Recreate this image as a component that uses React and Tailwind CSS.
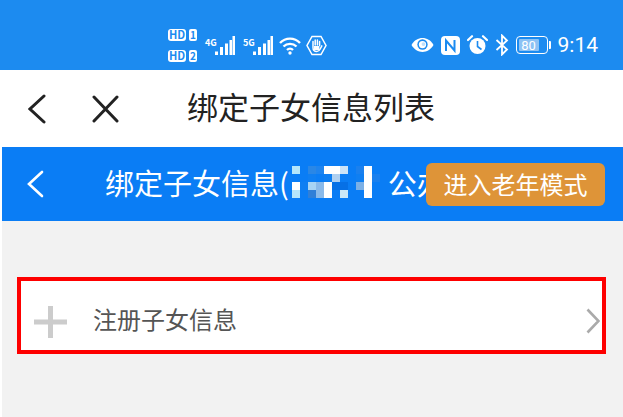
import React from 'react'

const CJK = { fontFamily: '"Noto Sans CJK SC", "Noto Sans", sans-serif' }

const B = '#0a7df5'
const W = '#ffffff'

// mosaic over the blurred name in the title, 8px cells
const MOSAIC = [
  ['#b5e6fb', B, '#2a87e6', '#1f84ee', W, W, '#cbe3f8', B, '#1a80ee', W, B],
  [B, B, '#0f7ff2', B, '#0f7ff2', '#b0d0f0', B, B, '#0f7ff2', W, '#1a80ee'],
  [W, '#0f7ff2', '#a8d4f4', '#8abaea', W, '#0670e6', '#0670e6', B, '#7cb0e6', W, B],
  ['#b5e6fb', B, '#2f7fd8', '#8abaea', W, B, '#cbe8f8', B, B, W, B],
]

const HdBadge = ({ n }) => (
  <div className="flex items-center gap-[3px]">
    <span className="flex h-[12px] w-[18px] items-center justify-center rounded-[3px] bg-white text-[11px] font-bold leading-none text-[#1c8bf0]">HD</span>
    <span className="flex h-[12px] w-[8px] items-center justify-center rounded-[2px] bg-white text-[10px] font-bold leading-none text-[#1c8bf0]">{n}</span>
  </div>
)

const Signal = ({ label }) => (
  <div className="flex items-start">
    <span className="mt-[2px] w-[10px] whitespace-nowrap text-[9px] font-bold leading-none text-white">{label}</span>
    <svg width="20" height="19" viewBox="0 0 20 19" fill="#fff">
      <rect x="0" y="15.5" width="3" height="3.5" />
      <rect x="5" y="11" width="3" height="8" />
      <rect x="10" y="7.5" width="3" height="11.5" />
      <rect x="14.5" y="4" width="2.5" height="15" />
      <rect x="17.5" y="0" width="2.5" height="19" />
    </svg>
  </div>
)

const Wifi = () => (
  <svg width="22" height="19" viewBox="0 0 22 19" fill="none" stroke="#fff" strokeWidth="2.4">
    <path d="M1 7C6.5 1.2 15.5 1.2 21 7" />
    <path d="M4.5 10.5C8 7 14 7 17.5 10.5" />
    <path d="M8 14C9.7 12.4 12.3 12.4 14 14" />
    <circle cx="11" cy="17" r="1.7" fill="#fff" stroke="none" />
  </svg>
)

const HandHex = () => (
  <svg width="21" height="21" viewBox="0 0 21 21" fill="none">
    <path d="M6 1.5H15L20 10.5L15 19.5H6L1 10.5Z" stroke="#fff" strokeWidth="1.5" />
    <path d="M7 10V6.5M9.2 10V5M11.4 10V5M13.6 10.5V6.5M7 9V12.5C7 15 8.6 16.5 10.8 16.5C12.6 16.5 13.5 15.5 14.2 14L15.8 10.8" stroke="#fff" strokeWidth="1.5" strokeLinecap="round" />
    <path d="M8 11H13.4V15H8Z" fill="#fff" />
  </svg>
)

const Eye = () => (
  <svg width="23" height="16" viewBox="0 0 24 16">
    <path d="M0.5 8C3.5 3 7.5 0.8 12 0.8S20.5 3 23.5 8C20.5 13 16.5 15.2 12 15.2S3.5 13 0.5 8Z" fill="#fff" />
    <circle cx="12" cy="7.5" r="5.4" fill="#1c8bf0" />
    <circle cx="12" cy="7.5" r="3.8" fill="#fff" />
    <circle cx="13" cy="7" r="2" fill="#bfe0fb" />
  </svg>
)

const Nfc = () => (
  <svg width="19" height="19" viewBox="0 0 19 19">
    <rect x="0" y="0" width="19" height="19" rx="4" fill="#fff" />
    <path d="M5 15V4.5L13.5 14.5V4" fill="none" stroke="#1c8bf0" strokeWidth="2" />
  </svg>
)

const Alarm = () => (
  <svg width="21" height="20" viewBox="0 0 21 20">
    <circle cx="10.5" cy="11" r="8" fill="#fff" />
    <path d="M10.5 6V11.5L14.5 14.5" fill="none" stroke="#1c8bf0" strokeWidth="1.6" />
    <path d="M1 5L5 1.2M20 5L16 1.2" stroke="#fff" strokeWidth="2.2" strokeLinecap="round" />
  </svg>
)

const Bluetooth = () => (
  <svg width="14" height="22" viewBox="0 0 14 22" fill="none" stroke="#fff" strokeWidth="1.8">
    <path d="M1.5 6L12 15.5L7 20.5V1.5L12 6.5L1.5 16" />
  </svg>
)

const Battery = () => (
  <div className="flex items-center gap-[1px]">
    <div className="flex h-[18px] w-[32px] items-center rounded-[4px] border-[1.5px] border-white p-[2px]">
      <div className="flex h-full w-[20px] items-center justify-center rounded-[1px] bg-[#8cc2f4] text-[13px] leading-none text-white" style={{ fontFamily: 'Roboto, sans-serif' }}>80</div>
    </div>
    <div className="h-[8px] w-[2px] rounded-r-[1px] bg-white" />
  </div>
)

export default function App() {
  return (
    <div className="flex h-[417px] w-[623px] flex-col overflow-hidden bg-white" style={CJK}>
      {/* status bar */}
      <div className="flex h-[70px] shrink-0 items-center bg-[#1c8bf0] pl-[168px] pr-[25px] pt-[20px]">
        <div className="flex flex-col gap-[9px]">
          <HdBadge n="1" />
          <HdBadge n="2" />
        </div>
        <div className="ml-[8px] flex gap-[8px]">
          <Signal label="4G" />
          <Signal label="5G" />
        </div>
        <div className="ml-[6px]"><Wifi /></div>
        <div className="ml-[5px]"><HandHex /></div>
        <div className="ml-auto flex items-center gap-[7px]">
          <Eye />
          <Nfc />
          <Alarm />
          <Bluetooth />
          <Battery />
          <span className="text-[21px] leading-none text-white" style={{ fontFamily: 'Roboto, sans-serif' }}>9:14</span>
        </div>
      </div>

      {/* browser title row */}
      <div className="flex h-[77px] shrink-0 items-center pl-[28px]">
        <svg width="18" height="30" viewBox="0 0 18 30" fill="none" stroke="#222" strokeWidth="3" strokeLinecap="round">
          <path d="M16 2L2 15L16 28" />
        </svg>
        <svg className="ml-[46px]" width="27" height="28" viewBox="0 0 27 28" fill="none" stroke="#222" strokeWidth="3" strokeLinecap="round">
          <path d="M2 2L25 26M25 2L2 26" />
        </svg>
        <h1 className="mb-[6px] ml-[68px] text-[31px] font-normal leading-none text-[#222]">绑定子女信息列表</h1>
      </div>

      {/* page header */}
      <div className="relative ml-[2px] flex h-[74px] shrink-0 items-center overflow-hidden bg-[#0a7df5]">
        <svg className="ml-[25px]" width="17" height="28" viewBox="0 0 17 28" fill="none" stroke="#fff" strokeWidth="2.6" strokeLinecap="round">
          <path d="M15 2L2 14L15 26" />
        </svg>
        <div className="mb-[4px] ml-[61px] flex items-center whitespace-nowrap text-[29px] leading-none text-white">
          <span>绑定子女信息(</span>
          <div className="ml-[3px] grid grid-cols-[repeat(11,8px)] grid-rows-[repeat(4,8px)]">
            {MOSAIC.flat().map((c, i) => (
              <div key={i} style={{ backgroundColor: c }} />
            ))}
          </div>
          <span className="ml-[8px]">公办</span>
        </div>
        <div className="absolute left-[424px] top-[16px] flex h-[43px] w-[179px] items-center justify-center rounded-[6px] bg-[#de9438] pb-[2px] text-[24px] leading-none text-white">
          进入老年模式
        </div>
      </div>

      {/* content */}
      <div className="ml-[2px] flex-1 bg-[#f2f2f2] pl-[15px] pr-[17px] pt-[56px]">
        <div className="flex h-[77px] items-center border-[4px] border-[#fe0000] bg-white pl-[13px] pr-[2px] pt-[12px]">
          <svg width="33" height="32" viewBox="0 0 33 32" fill="#cccccc">
            <rect x="0" y="13.5" width="33" height="5" />
            <rect x="14" y="0" width="5" height="32" />
          </svg>
          <span className="mb-[6px] ml-[26px] text-[24px] leading-none text-[#555]">注册子女信息</span>
          <svg className="ml-auto mb-[2px]" width="14" height="26" viewBox="0 0 14 26" fill="none" stroke="#aaaaaa" strokeWidth="2.6">
            <path d="M1.5 1.5L12.5 13L1.5 24.5" />
          </svg>
        </div>
      </div>
    </div>
  )
}
